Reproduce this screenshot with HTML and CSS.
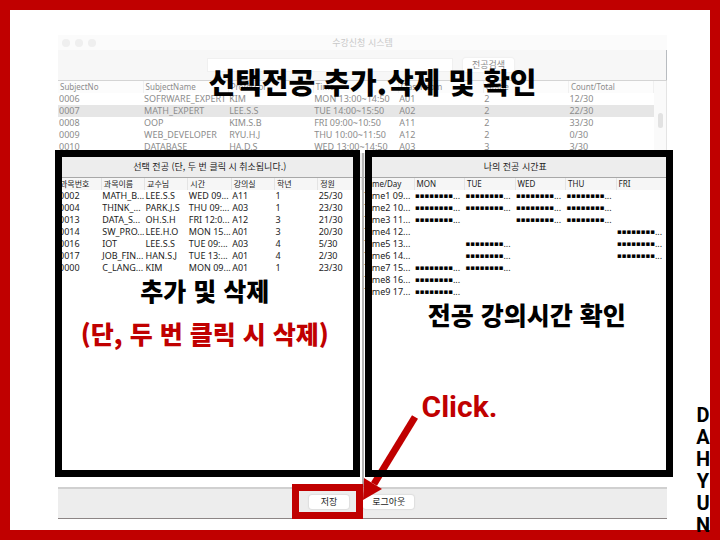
FILE: index.html
```html
<!DOCTYPE html>
<html lang="ko">
<head>
<meta charset="utf-8">
<title>수강신청 시스템</title>
<link rel="stylesheet" href="styles.css">
</head>
<body>
<main class="slide">
  <h1 class="headline">선택전공 추가.삭제 및 확인</h1>
  <section class="app">
    <header class="titlebar">
      <span class="lights"><i></i><i></i><i></i></span>
      <span>수강신청 시스템</span>
    </header>
    <form class="search">
      <input class="search-box" type="text" aria-label="전공검색">
      <button class="button search-button" type="button">전공검색</button>
    </form>
    <div class="catalog">
      <table class="grid">
        <thead><tr><th>SubjectNo</th><th>SubjectName</th><th>Professor</th><th>Time</th><th>ClassRoom</th><th>Grade</th><th>Count/Total</th></tr></thead>
        <tbody>
          <tr><td>0006</td><td>SOFRWARE_EXPERT</td><td>KIM</td><td>MON 13:00~14:50</td><td>A01</td><td>2</td><td>12/30</td></tr>
          <tr class="selected"><td>0007</td><td>MATH_EXPERT</td><td>LEE.S.S</td><td>TUE 14:00~15:50</td><td>A02</td><td>2</td><td>22/30</td></tr>
          <tr><td>0008</td><td>OOP</td><td>KIM.S.B</td><td>FRI 09:00~10:50</td><td>A11</td><td>2</td><td>33/30</td></tr>
          <tr><td>0009</td><td>WEB_DEVELOPER</td><td>RYU.H.J</td><td>THU 10:00~11:50</td><td>A12</td><td>2</td><td>0/30</td></tr>
          <tr><td>0010</td><td>DATABASE</td><td>HA.D.S</td><td>WED 13:00~14:50</td><td>A03</td><td>3</td><td>3/30</td></tr>
        </tbody>
      </table>
      <div class="scrollbar"><span class="thumb"></span></div>
    </div>
    <div class="panes">
      <section class="pane pane-left">
        <h2 class="pane-title">선택 전공 (단, 두 번 클릭 시 취소됩니다.)</h2>
        <table class="grid">
          <thead><tr><th>과목번호</th><th>과목이름</th><th>교수님</th><th>시간</th><th>강의실</th><th>학년</th><th>정원</th></tr></thead>
          <tbody>
            <tr><td>0002</td><td>MATH_B...</td><td>LEE.S.S</td><td>WED 09...</td><td>A11</td><td>1</td><td>25/30</td></tr>
            <tr><td>0004</td><td>THINK_...</td><td>PARK.J.S</td><td>THU 09:...</td><td>A03</td><td>1</td><td>23/30</td></tr>
            <tr><td>0013</td><td>DATA_S...</td><td>OH.S.H</td><td>FRI 12:0...</td><td>A12</td><td>3</td><td>21/30</td></tr>
            <tr><td>0014</td><td>SW_PRO...</td><td>LEE.H.O</td><td>MON 15...</td><td>A01</td><td>3</td><td>20/30</td></tr>
            <tr><td>0016</td><td>IOT</td><td>LEE.S.S</td><td>TUE 09:...</td><td>A03</td><td>4</td><td>5/30</td></tr>
            <tr><td>0017</td><td>JOB_FIN...</td><td>HAN.S.J</td><td>TUE 13:...</td><td>A01</td><td>4</td><td>2/30</td></tr>
            <tr><td>0000</td><td>C_LANG...</td><td>KIM</td><td>MON 09...</td><td>A01</td><td>1</td><td>23/30</td></tr>
          </tbody>
        </table>
        <p class="note">추가 및 삭제</p>
        <p class="note note-red">(단, 두 번 클릭 시 삭제)</p>
        <div class="frame frame-left"></div>
      </section>
      <section class="pane pane-right">
        <h2 class="pane-title">나의 전공 시간표</h2>
        <table class="grid timetable">
          <thead><tr><th>Time/Day</th><th>MON</th><th>TUE</th><th>WED</th><th>THU</th><th>FRI</th></tr></thead>
          <tbody>
            <tr><td>Time1 09...</td><td><b>▪▪▪▪▪▪▪▪</b>...</td><td><b>▪▪▪▪▪▪▪▪</b>...</td><td><b>▪▪▪▪▪▪▪▪</b>...</td><td><b>▪▪▪▪▪▪▪▪</b>...</td><td></td></tr>
            <tr><td>Time2 10...</td><td><b>▪▪▪▪▪▪▪▪</b>...</td><td><b>▪▪▪▪▪▪▪▪</b>...</td><td><b>▪▪▪▪▪▪▪▪</b>...</td><td><b>▪▪▪▪▪▪▪▪</b>...</td><td></td></tr>
            <tr><td>Time3 11...</td><td><b>▪▪▪▪▪▪▪▪</b>...</td><td></td><td><b>▪▪▪▪▪▪▪▪</b>...</td><td><b>▪▪▪▪▪▪▪▪</b>...</td><td></td></tr>
            <tr><td>Time4 12...</td><td></td><td></td><td></td><td></td><td><b>▪▪▪▪▪▪▪▪</b>...</td></tr>
            <tr><td>Time5 13...</td><td></td><td><b>▪▪▪▪▪▪▪▪</b>...</td><td></td><td></td><td><b>▪▪▪▪▪▪▪▪</b>...</td></tr>
            <tr><td>Time6 14...</td><td></td><td><b>▪▪▪▪▪▪▪▪</b>...</td><td></td><td></td><td><b>▪▪▪▪▪▪▪▪</b>...</td></tr>
            <tr><td>Time7 15...</td><td><b>▪▪▪▪▪▪▪▪</b>...</td><td><b>▪▪▪▪▪▪▪▪</b>...</td><td></td><td></td><td></td></tr>
            <tr><td>Time8 16...</td><td><b>▪▪▪▪▪▪▪▪</b>...</td><td></td><td></td><td></td><td></td></tr>
            <tr><td>Time9 17...</td><td><b>▪▪▪▪▪▪▪▪</b>...</td><td></td><td></td><td></td><td></td></tr>
          </tbody>
        </table>
        <p class="note">전공 강의시간 확인</p>
        <svg class="arrow" width="60" height="90" viewBox="0 0 60 90" aria-hidden="true">
          <path d="M53 6 12 73" stroke="#c00000" stroke-width="7" fill="none"/>
          <path d="M2 67 20 78 1 89Z" fill="#c00000"/>
        </svg>
        <p class="click">Click.</p>
        <div class="frame frame-right"></div>
      </section>
    </div>
    <footer class="actions">
      <span class="save"><button class="button" type="button">저장</button></span>
      <button class="button logout" type="button">로그아웃</button>
    </footer>
  </section>
  <p class="author">DAHYUN</p>
</main>
</body>
</html>
```
FILE: styles.css
```css
* { box-sizing: border-box; }
body { margin: 0; font-family: "Noto Sans", "Noto Sans CJK KR", sans-serif; }
h1, h2, p { margin: 0; }
.slide {
  position: relative;
  display: flex;
  min-height: 100vh;
  padding: 25px 43px 11px 48px;
  border: 10px solid #c00000;
  background: #fff;
}
.headline {
  position: absolute;
  z-index: 3;
  top: 49px;
  left: 0;
  right: 0;
  padding-left: 25px;
  font: 900 29px/44px "Noto Sans CJK KR", sans-serif;
  text-align: center;
}
.app {
  flex: 1;
  display: flex;
  flex-direction: column;
  min-width: 0;
  border-bottom: 1px solid #8c8585;
  font-size: 9px;
}
.titlebar {
  display: flex;
  align-items: center;
  justify-content: center;
  position: relative;
  height: 15px;
  background: #fbfbfb;
  color: #c8c8c8;
  font-family: "Noto Sans CJK KR", sans-serif;
}
.lights { position: absolute; left: 4px; display: flex; gap: 5px; }
.lights i { width: 8px; height: 8px; border-radius: 50%; background: #efefef; }
.search {
  display: flex;
  align-items: center;
  justify-content: center;
  gap: 10px;
  height: 30px;
  padding-right: 3px;
  background: #f7f7f7;
  border-right: 1px solid #b8bcc0;
}
.search-box {
  width: 246px;
  height: 14px;
  padding: 0 4px;
  border: 1px solid #f0f0f0;
  background: #fff;
}
.button {
  height: 14px;
  padding: 0 13px;
  border: 0;
  border-radius: 3px;
  background: #fff;
  box-shadow: 0 0 1px 1px #dedede;
  color: #222;
  font: 9px/14px "Noto Sans CJK KR", sans-serif;
}
.search-button { padding: 0 9px; color: #8c8c8c; box-shadow: 0 0 1px 1px #f0f0f0; }
.catalog {
  display: flex;
  height: 73px;
  overflow: hidden;
  border-top: 1px solid #d4d4d4;
  color: #8c8c8c;
}
.catalog .grid { flex: 1; }
.scrollbar {
  width: 13px;
  padding: 32px 3px 0 4px;
  background: #fafafa;
  border-right: 1px solid #e4e4e4;
}
.thumb { display: block; height: 15px; border-radius: 3px; background: #e2e2e2; }
.grid { width: 100%; table-layout: fixed; border-collapse: collapse; }
.grid tr { height: 12px; }
.grid th, .grid td {
  padding: 0 0 0 1px;
  font-size: 9px;
  line-height: 12px;
  text-align: left;
  font-weight: 400;
  white-space: nowrap;
}
.grid th {
  padding-left: 2px;
  background: #f6f6f6;
  border-right: 1px solid #e4e4e4;
  font-size: 8px;
}
.catalog th { background: #fcfcfc; border-color: #f0f0f0; }
.selected { background: #e6e6e6; }
.panes { flex: 1; display: flex; color: #1c1c1c; }
.pane { position: relative; flex: 1; min-width: 0; background: #fff; }
.pane-left { border-right: 2px solid #b4b4b4; }
.pane-title {
  height: 25px;
  padding-top: 4px;
  border-bottom: 1px solid #a8a8a8;
  background: #ededed;
  font: 9px/20px "Noto Sans CJK KR", sans-serif;
  text-align: center;
}
.timetable b { font: 7px/7px "DejaVu Sans", sans-serif; vertical-align: 1px; color: #000; }
.note {
  padding-right: 10px;
  font: 900 25px/32px "Noto Sans CJK KR", sans-serif;
  color: #000;
  text-align: center;
}
.pane-right .note { padding: 0 0 0 23px; }
.note-red { margin-top: 11px; color: #c00000; }
.click {
  position: absolute;
  left: 58px;
  bottom: 62px;
  color: #c00000;
  font: 700 30px/36px Roboto, sans-serif;
}
.arrow { position: absolute; left: -2px; bottom: -14px; }
.frame { position: absolute; top: -3px; bottom: 10px; border: 7px solid #000; }
.frame-left { left: -3px; right: 2px; }
.frame-right { left: 1px; right: -6px; }
.actions {
  display: flex;
  align-items: center;
  justify-content: center;
  height: 31px;
  padding: 0 19px 4px 0;
  border-top: 2px solid #d0d0d0;
  background: #ededed;
}
.save {
  position: relative;
  display: flex;
  margin: -5px 0;
  padding: 4px 7px 3px 10px;
  border: 7px solid #c00000;
}
.actions .button { padding: 0 12px; }
.actions .logout { padding: 0 9px; }
.author {
  position: absolute;
  right: 0;
  bottom: -6px;
  width: 14px;
  font: 700 20px/22px Roboto, sans-serif;
  text-align: center;
  word-break: break-all;
}
```
